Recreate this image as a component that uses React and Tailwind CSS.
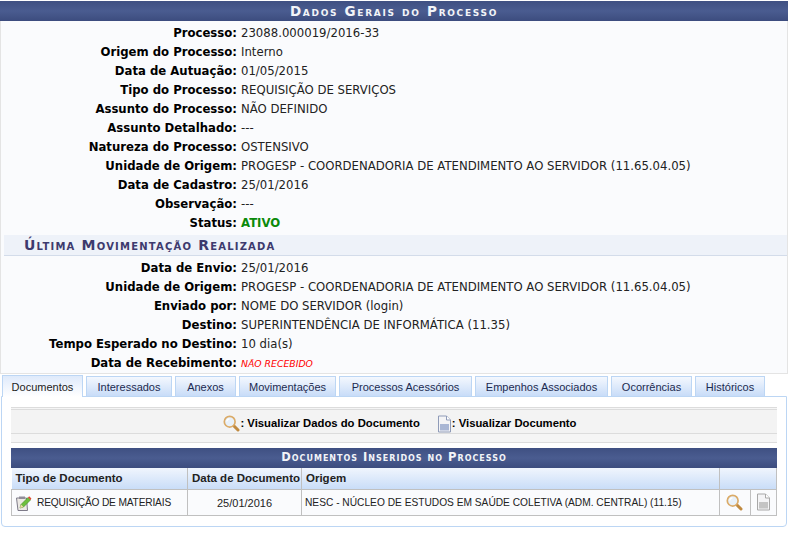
const VERDANA = "font-['DejaVu_Sans',Verdana,sans-serif]";

const geralRows = [
  ['Processo:', '23088.000019/2016-33'],
  ['Origem do Processo:', 'Interno'],
  ['Data de Autuação:', '01/05/2015'],
  ['Tipo do Processo:', 'REQUISIÇÃO DE SERVIÇOS'],
  ['Assunto do Processo:', 'NÃO DEFINIDO'],
  ['Assunto Detalhado:', '---'],
  ['Natureza do Processo:', 'OSTENSIVO'],
  ['Unidade de Origem:', 'PROGESP - COORDENADORIA DE ATENDIMENTO AO SERVIDOR (11.65.04.05)'],
  ['Data de Cadastro:', '25/01/2016'],
  ['Observação:', '---'],
];

const movRows = [
  ['Data de Envio:', '25/01/2016'],
  ['Unidade de Origem:', 'PROGESP - COORDENADORIA DE ATENDIMENTO AO SERVIDOR (11.65.04.05)'],
  ['Enviado por:', 'NOME DO SERVIDOR (login)'],
  ['Destino:', 'SUPERINTENDÊNCIA DE INFORMÁTICA (11.35)'],
  ['Tempo Esperado no Destino:', '10 dia(s)'],
];

const tabs = [
  { name: 'Interessados', width: 'w-[86px]' },
  { name: 'Anexos', width: 'w-[61px]' },
  { name: 'Movimentações', width: 'w-[97px]' },
  { name: 'Processos Acessórios', width: 'w-[133px]' },
  { name: 'Empenhos Associados', width: 'w-[133px]' },
  { name: 'Ocorrências', width: 'w-[81px]' },
  { name: 'Históricos', width: 'w-[70px]' },
];

const MagnifierIcon = () => (
  <svg width="17" height="17" viewBox="0 0 17 17">
    <path d="M10.5 10.5 L15 15" stroke="#c08a40" strokeWidth="3" strokeLinecap="round" />
    <circle cx="6.7" cy="6.7" r="5.4" fill="#e8f1fa" stroke="#dbab68" strokeWidth="1.7" />
    <path d="M3.8 6.5 A3 3 0 0 1 6.5 3.8" fill="none" stroke="#ffffff" strokeWidth="1.2" />
  </svg>
);

const PageIcon = ({ dark }) => (
  <svg width="15" height="18" viewBox="0 0 15 18">
    <path d="M1.5 1 H9.5 L13.5 5 V17 H1.5 Z" fill="#f4f4f6" stroke={dark ? '#8f9bb8' : '#a8a8a8'} />
    <path d="M9.5 1 V5 H13.5" fill="#ffffff" stroke={dark ? '#8f9bb8' : '#a8a8a8'} />
    <rect x="3" y="9" width="9" height="6.5" fill={dark ? '#a9b6d4' : '#c4c4c4'} />
  </svg>
);

const EditIcon = () => (
  <svg width="17" height="17" viewBox="0 0 17 17">
    <path d="M1.5 3 H11.5 L12.5 15.5 H3 Z" fill="#ece9e4" stroke="#7d7a88" />
    <rect x="4" y="1.5" width="6" height="2.5" fill="#8f8c98" />
    <path d="M5 13 L6 9.5 L13 2.5 L15.5 5 L8.5 12 Z" fill="#6cbf3c" stroke="#3f8a22" strokeWidth="0.6" />
    <path d="M13 2.5 L14.2 1.3 L16.4 3.6 L15.5 5 Z" fill="#e0492f" />
    <path d="M5 13 L6 9.5 L8.5 12 Z" fill="#f2d9a8" />
  </svg>
);

function InfoRow({ label, children }) {
  return (
    <div className="flex h-[19px] items-center whitespace-nowrap">
      <span className="w-[236px] shrink-0 text-right font-bold text-black">{label}</span>
      <span className="ml-1 text-[#222]">{children}</span>
    </div>
  );
}

function BarTitle({ className, children }) {
  return (
    <div className={`flex h-5 items-center justify-center bg-[linear-gradient(#3f5082,#4a5c90_50%,#3c4c7e)] font-bold text-[#f2f4f8] [font-variant:small-caps] ${className}`}>
      {children}
    </div>
  );
}

export default function App() {
  return (
    <div className={`h-[535px] w-[788px] overflow-hidden bg-white pt-px text-[11.7px] ${VERDANA}`}>
      <BarTitle className="text-[13.5px] tracking-[1.7px]">Dados Gerais do Processo</BarTitle>

      <div className="h-[353px] border border-t-0 border-[#e4e4e4] bg-[#fafbfd] pt-[3px]">
        {geralRows.map(([label, value]) => (
          <InfoRow key={label} label={label}>{value}</InfoRow>
        ))}
        <InfoRow label="Status:">
          <span className="font-bold text-[#0a8a0a]">ATIVO</span>
        </InfoRow>

        <div className="mb-[3px] ml-[3px] mt-0.5 flex h-[21px] items-center border-b border-[#d3dcea] bg-[#eef2f9] pl-5 text-[14px] font-bold tracking-[1.2px] text-[#3d3a6e] [font-variant:small-caps]">
          Última Movimentação Realizada
        </div>

        {movRows.map(([label, value]) => (
          <InfoRow key={label} label={label}>{value}</InfoRow>
        ))}
        <InfoRow label="Data de Recebimento:">
          <span className="text-[9.3px] italic text-[#f00]">NÃO RECEBIDO</span>
        </InfoRow>
      </div>

      <div className="ml-0.5 mt-px flex h-[21px] items-end whitespace-nowrap font-['Liberation_Sans',Arial,sans-serif] text-[11px] text-[#1c2a50]">
        <div className="relative z-10 mb-[-1px] flex h-[22px] w-[81px] items-center justify-center border border-b-0 border-[#bcd6f4] bg-[linear-gradient(#dfeafb,#ffffff)] pt-px text-[#222]">
          Documentos
        </div>
        {tabs.map((tab) => (
          <div
            key={tab.name}
            className={`ml-[3px] flex h-5 items-center justify-center border border-b-0 border-[#bcd6f4] bg-[linear-gradient(#f4f8fe,#c8dcf8)] pt-px ${tab.width}`}
          >
            {tab.name}
          </div>
        ))}
      </div>

      <div className="ml-px h-[131px] w-[786px] rounded-b-sm border border-[#bcd6f4] bg-white px-[9px] pt-[10px]">
        <div className="h-[36px] border-t-[3px] border-b border-double border-t-[#dcdcdc] border-b-[#dcdcdc] bg-[#f5f5f5]">
          <div className="flex h-6 items-center justify-center gap-[17px] border-b border-[#dcdcdc] bg-[#f3f3f3] pl-3 pt-1 font-['Liberation_Sans',Arial,sans-serif] text-[11.3px] font-bold text-black">
            <span className="flex items-center">
              <MagnifierIcon />
              <span>: Visualizar Dados do Documento</span>
            </span>
            <span className="flex items-center">
              <PageIcon dark />
              <span>: Visualizar Documento</span>
            </span>
          </div>
        </div>
        <div className="mt-[5px]">
          <BarTitle className="text-[11.5px] tracking-[1px]">Documentos Inseridos no Processo</BarTitle>
          <table className="w-full table-fixed border-collapse whitespace-nowrap font-['Liberation_Sans',Arial,sans-serif] text-[10.2px] text-[#222]">
            <colgroup>
              <col className="w-[176px]" />
              <col className="w-[114px]" />
              <col />
              <col className="w-[31px]" />
              <col className="w-[26px]" />
            </colgroup>
            <thead>
              <tr className="h-[21px] bg-[linear-gradient(#f0f5fd,#c9ddf8)] text-left text-[11.5px] font-bold">
                <th className="border-r border-b border-[#c0c0c0] pl-1 pt-px">Tipo de Documento</th>
                <th className="border-r border-b border-[#c0c0c0] pl-1 pt-px">Data de Documento</th>
                <th className="border-r border-b border-[#c0c0c0] pl-1 pt-px">Origem</th>
                <th colSpan={2} className="border-r border-b border-[#c0c0c0]" />
              </tr>
            </thead>
            <tbody>
              <tr className="h-[26px] border-b border-[#c0c0c0] bg-[#fafbfd]">
                <td className="border-x border-[#c0c0c0] pl-[3px] pt-0.5 tracking-[-0.17px]">
                  <span className="flex items-center gap-[5px]">
                    <EditIcon />
                    REQUISIÇÃO DE MATERIAIS
                  </span>
                </td>
                <td className="border-r border-[#c0c0c0] pt-0.5 text-center text-[11px]">25/01/2016</td>
                <td className="border-r border-[#c0c0c0] pl-[3px] pt-0.5">
                  NESC - NÚCLEO DE ESTUDOS EM SAÚDE COLETIVA (ADM. CENTRAL) (11.15)
                </td>
                <td className="border-r border-[#c0c0c0] pl-1.5"><MagnifierIcon /></td>
                <td className="border-r border-[#c0c0c0] pl-[5px]"><PageIcon /></td>
              </tr>
            </tbody>
          </table>
        </div>
      </div>
    </div>
  );
}
